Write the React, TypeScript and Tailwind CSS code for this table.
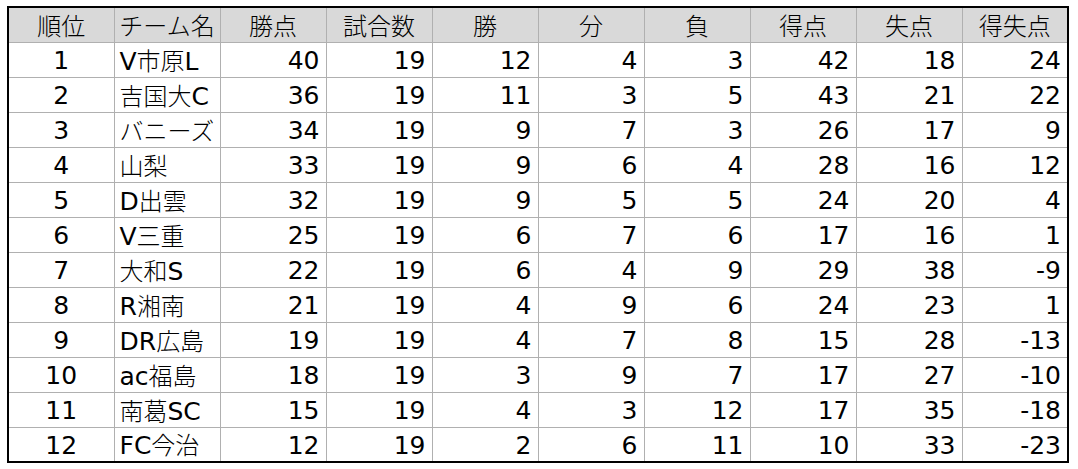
const HEAD = ['順位', 'チーム名', '勝点', '試合数', '勝', '分', '負', '得点', '失点', '得失点'];

const ROWS: [number, string, number, number, number, number, number, number, number, number][] = [
  [1, 'V市原L', 40, 19, 12, 4, 3, 42, 18, 24],
  [2, '吉国大C', 36, 19, 11, 3, 5, 43, 21, 22],
  [3, 'バニーズ', 34, 19, 9, 7, 3, 26, 17, 9],
  [4, '山梨', 33, 19, 9, 6, 4, 28, 16, 12],
  [5, 'D出雲', 32, 19, 9, 5, 5, 24, 20, 4],
  [6, 'V三重', 25, 19, 6, 7, 6, 17, 16, 1],
  [7, '大和S', 22, 19, 6, 4, 9, 29, 38, -9],
  [8, 'R湘南', 21, 19, 4, 9, 6, 24, 23, 1],
  [9, 'DR広島', 19, 19, 4, 7, 8, 15, 28, -13],
  [10, 'ac福島', 18, 19, 3, 9, 7, 17, 27, -10],
  [11, '南葛SC', 15, 19, 4, 3, 12, 17, 35, -18],
  [12, 'FC今治', 12, 19, 2, 6, 11, 10, 33, -23],
];

const CJK = '"Noto Sans CJK JP", sans-serif';

// latin in DejaVu regular, kanji/kana in a lighter Noto CJK
function Name({ text }: { text: string }) {
  const parts = text.split(/([A-Za-z]+)/).filter(Boolean);
  return (
    <>
      {parts.map((p, i) =>
        /^[A-Za-z]+$/.test(p) ? (
          <span key={i}>{p}</span>
        ) : (
          <span key={i} className="font-light text-[24px]" style={{ fontFamily: CJK }}>{p}</span>
        ),
      )}
    </>
  );
}

export default function App() {
  return (
    <div className="w-[1078px] h-[469px] bg-white pt-[6px] pl-[7px]" style={{ fontFamily: '"DejaVu Sans", "Noto Sans CJK JP", sans-serif' }}>
      <table className="border-collapse border-2 border-black text-[25px] leading-none text-black table-fixed w-[1062px]">
        <thead>
          <tr className="bg-[#d9d9d9] h-[35px]">
            {HEAD.map((h) => (
              <th key={h} className="w-[106px] border border-[#b0b0b0] font-light text-[24px] text-center p-0 pt-[1px]" style={{ fontFamily: CJK }}>{h}</th>
            ))}
          </tr>
        </thead>
        <tbody>
          {ROWS.map((r) => (
            <tr key={r[0]} className="h-[35px]">
              {r.map((v, i) => (
                <td
                  key={i}
                  className={
                    'border border-[#b0b0b0] p-0 pt-[2px] ' +
                    (i === 0 ? 'text-center' : i === 1 ? 'text-left pl-[5px]' : 'text-right pr-[6px]')
                  }
                >
                  {i === 1 ? <Name text={String(v)} /> : v}
                </td>
              ))}
            </tr>
          ))}
        </tbody>
      </table>
    </div>
  );
}
